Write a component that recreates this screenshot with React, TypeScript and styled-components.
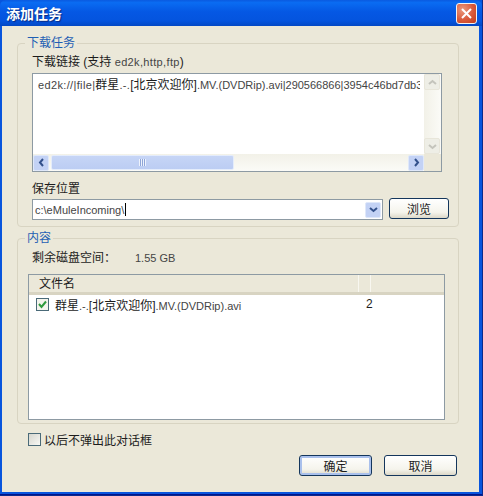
import styled, { createGlobalStyle } from 'styled-components'

const GlobalStyle = createGlobalStyle`
    html, body {
        margin: 0;
        padding: 0;
        width: 483px;
        height: 496px;
        overflow: hidden;
        background: #0a2a8c;
    }
    * {
        box-sizing: border-box;
    }
`

const Window = styled.div`
    width: 482px;
    height: 495px;
    display: flex;
    flex-direction: column;
    background: #0855dd;
    padding: 0 3px 2px 2px;
    border-bottom: 1px solid #00138c;
    font-family: "Liberation Sans", "Noto Sans CJK SC", sans-serif;
    font-size: 12px;
    color: #1c1c1c;
`

const TitleBar = styled.div`
    height: 26px;
    margin: 0 -3px 0 -2px;
    flex: none;
    display: flex;
    align-items: center;
    justify-content: space-between;
    padding: 0 5px 0 6px;
    background: linear-gradient(180deg, #0a5ae0 0%, #0a6cf2 10%, #0558e4 45%, #0454de 80%, #0348c4 100%);
    border-radius: 6px 6px 0 0;
`

const Title = styled.span`
    font-family: "Noto Sans CJK SC", sans-serif;
    font-size: 14px;
    font-weight: 700;
    color: #fff;
    text-shadow: 1px 1px 1px #0a2a80;
`

const CloseButton = styled.button`
    width: 21px;
    height: 21px;
    padding: 0;
    display: flex;
    align-items: center;
    justify-content: center;
    border: 1px solid #f2f2f2;
    border-radius: 3px;
    background: radial-gradient(circle at 30% 30%, #ea9a7e, #d9593a 55%, #c13c1c);
`

const Body = styled.div`
    flex: 1;
    display: flex;
    flex-direction: column;
    background: #ebe8d9;
    padding: 10px 20px 0 15px;
`

const Group = styled.fieldset<{ $height: number }>`
    height: ${({ $height }) => $height}px;
    margin: 0 0 4px;
    padding: 0 0 0 10px;
    border: 1px solid #d8d4c2;
    border-radius: 4px;
    min-width: 0;
    flex: none;
`

const GroupTitle = styled.legend`
    margin-left: -3px;
    padding: 0 2px;
    height: 15px;
    line-height: 15px;
    font-size: 12px;
    color: #1f5fb4;
`

const FieldLabel = styled.div<{ $top?: number }>`
    margin: ${({ $top }) => $top ?? 0}px 0 0 4px;
    height: 16px;
    line-height: 16px;
`

const Latin = styled.span<{ $spaced?: boolean }>`
    font-size: 11px;
    color: #444;
    letter-spacing: ${({ $spaced }) => ($spaced ? '0.35px' : '0')};
`

const LinkBox = styled.div`
    margin: 3px 0 0 4px;
    width: 410px;
    height: 99px;
    display: grid;
    grid-template-columns: minmax(0, 1fr) 17px;
    grid-template-rows: minmax(0, 1fr) 17px;
    border: 1px solid #8d9aa3;
    background: #fff;
`

const LinkText = styled.div`
    padding: 3px 0 0 5px;
    margin-right: 4px;
    white-space: nowrap;
    overflow: hidden;
    color: #1c1c1c;
    line-height: 16px;
`

const VScroll = styled.div`
    display: flex;
    flex-direction: column;
    justify-content: space-between;
    background: linear-gradient(90deg, #f2f1e8, #fbfbf7);
`

const HScroll = styled.div`
    display: flex;
    align-items: center;
    background: linear-gradient(180deg, #f2f1e8, #fbfbf7);
`

const ScrollCorner = styled.div`
    background: #ebe8d9;
`

const Arrow = styled.div<{ $disabled?: boolean }>`
    width: 16px;
    height: 16px;
    flex: none;
    display: flex;
    align-items: center;
    justify-content: center;
    border: 1px solid ${({ $disabled }) => ($disabled ? '#e8e6da' : '#dfe8fa')};
    border-radius: 2px;
    background: ${({ $disabled }) => ($disabled ? '#eeeee6' : '#c3d2f5')};
`

const Thumb = styled.div`
    width: 183px;
    height: 15px;
    margin-left: 2px;
    display: flex;
    align-items: center;
    justify-content: center;
    border: 1px solid #e4ecfb;
    border-radius: 2px;
    background: linear-gradient(180deg, #c6d5f6, #bccdf3);
`

const Grip = styled.div`
    width: 7px;
    height: 7px;
    background: repeating-linear-gradient(90deg, #eef3fd 0 1px, #8fa6d8 1px 2px);
`

const HSpacer = styled.div`
    flex: 1;
`

const PathRow = styled.div`
    margin: 1px 0 0 4px;
    display: flex;
    align-items: flex-start;
    gap: 6px;
`

const PathInput = styled.div`
    width: 351px;
    height: 21px;
    margin-top: 1px;
    display: flex;
    align-items: center;
    justify-content: space-between;
    padding: 0 1px 0 2px;
    border: 1px solid #8d9aa3;
    background: #fff;
    color: #444;
    font-size: 11px;
`

const Caret = styled.span`
    display: inline-block;
    width: 1px;
    height: 13px;
    margin-left: 1px;
    vertical-align: -2px;
    background: #000;
`

const Button = styled.button<{ $width: number; $primary?: boolean }>`
    width: ${({ $width }) => $width}px;
    height: 21px;
    padding: 0;
    font: inherit;
    color: #1c1c1c;
    border: 1px solid #14365c;
    border-radius: 3px;
    background: linear-gradient(180deg, #fff 0%, #f5f4ec 70%, #dcd8c8 100%);
    box-shadow: ${({ $primary }) => ($primary ? 'inset 0 0 0 2px #a9c0ec' : 'none')};
`

const FreeRow = styled.div`
    margin: 4px 0 0 4px;
    height: 16px;
    line-height: 16px;
    display: flex;
`

const FreeLabel = styled.span`
    width: 103px;
`

const FileList = styled.div`
    margin: 8px 0 0 0;
    width: 417px;
    height: 146px;
    border: 1px solid #8d9aa3;
    background: #fff;
`

const ListHeader = styled.div`
    height: 20px;
    display: grid;
    grid-template-columns: 330px 12px 1fr;
    background: #ebe8d9;
    border-bottom: 3px solid #d8d4c2;
`

const HeaderCell = styled.div`
    padding-left: 10px;
    line-height: 19px;
    height: 17px;
    border-right: 1px solid #f8f7f0;
`

const ListRow = styled.div`
    height: 18px;
    display: grid;
    grid-template-columns: 330px 1fr;
    align-items: center;
    padding-left: 7px;
`

const FileName = styled.div`
    display: flex;
    align-items: center;
    gap: 6px;
    white-space: nowrap;
`

const CheckBox = styled.div<{ $checked?: boolean }>`
    width: 13px;
    height: 13px;
    flex: none;
    display: flex;
    align-items: center;
    justify-content: center;
    border: 1px solid #4a6a78;
    background: ${({ $checked }) => ($checked ? '#f4f4ec' : 'linear-gradient(135deg, #d6d6ce, #f8f8f4)')};
`

const DontAsk = styled.div`
    margin: 1px 0 0 11px;
    display: flex;
    align-items: center;
    gap: 3px;
    height: 20px;
`

const Footer = styled.div`
    margin: 6px 2px 0 0;
    display: flex;
    justify-content: flex-end;
    gap: 12px;
`

function Chevron({ dir, color }: { dir: 'up' | 'down' | 'left' | 'right'; color: string }) {
    const points = {
        up: '1,6 4.5,3 8,6',
        down: '1,3 4.5,6 8,3',
        left: '6,1 3,4.5 6,8',
        right: '3,1 6,4.5 3,8',
    }[dir]
    return (
        <svg width="9" height="9" viewBox="0 0 9 9">
            <polyline points={points} fill="none" stroke={color} strokeWidth="2" />
        </svg>
    )
}

export default function App() {
    return (
        <>
            <GlobalStyle />
            <Window>
                <TitleBar>
                    <Title>添加任务</Title>
                    <CloseButton aria-label="关闭">
                        <svg width="13" height="13" viewBox="0 0 13 13">
                            <path d="M2 2 L11 11 M11 2 L2 11" stroke="#fff" strokeWidth="2" />
                        </svg>
                    </CloseButton>
                </TitleBar>
                <Body>
                    <Group $height={191}>
                        <GroupTitle>下载任务</GroupTitle>
                        <FieldLabel $top={3}>下载链接 (支持 <Latin $spaced>ed2k,http,ftp</Latin>)</FieldLabel>
                        <LinkBox>
                            <LinkText>
                                <Latin $spaced>ed2k://|file|</Latin>群星<Latin $spaced>.-.</Latin>[北京欢迎你]<Latin>.MV.(DVDRip).avi|290566866|3954c46bd7db3</Latin>
                            </LinkText>
                            <VScroll>
                                <Arrow $disabled><Chevron dir="up" color="#c4c4bc" /></Arrow>
                                <Arrow $disabled><Chevron dir="down" color="#c4c4bc" /></Arrow>
                            </VScroll>
                            <HScroll>
                                <Arrow><Chevron dir="left" color="#33518c" /></Arrow>
                                <Thumb><Grip /></Thumb>
                                <HSpacer />
                                <Arrow><Chevron dir="right" color="#33518c" /></Arrow>
                            </HScroll>
                            <ScrollCorner />
                        </LinkBox>
                        <FieldLabel $top={9}>保存位置</FieldLabel>
                        <PathRow>
                            <PathInput>
                                <span>c:\eMuleIncoming\<Caret /></span>
                                <Arrow><Chevron dir="down" color="#33518c" /></Arrow>
                            </PathInput>
                            <Button $width={60}>浏览</Button>
                        </PathRow>
                    </Group>
                    <Group $height={193}>
                        <GroupTitle>内容</GroupTitle>
                        <FreeRow>
                            <FreeLabel>剩余磁盘空间：</FreeLabel>
                            <Latin>1.55 GB</Latin>
                        </FreeRow>
                        <FileList>
                            <ListHeader>
                                <HeaderCell>文件名</HeaderCell>
                                <HeaderCell />
                            </ListHeader>
                            <ListRow>
                                <FileName>
                                    <CheckBox $checked>
                                        <svg width="11" height="11" viewBox="0 0 11 11">
                                            <polyline points="2,5 4.5,8 9,2.5" fill="none" stroke="#2f9a3c" strokeWidth="2" />
                                        </svg>
                                    </CheckBox>
                                    <span>
                                        群星<Latin>.-.</Latin>[北京欢迎你]<Latin>.MV.(DVDRip).avi</Latin>
                                    </span>
                                </FileName>
                                <span>2</span>
                            </ListRow>
                        </FileList>
                    </Group>
                    <DontAsk>
                        <CheckBox />
                        <span>以后不弹出此对话框</span>
                    </DontAsk>
                    <Footer>
                        <Button $width={73} $primary>确定</Button>
                        <Button $width={73}>取消</Button>
                    </Footer>
                </Body>
            </Window>
        </>
    )
}
